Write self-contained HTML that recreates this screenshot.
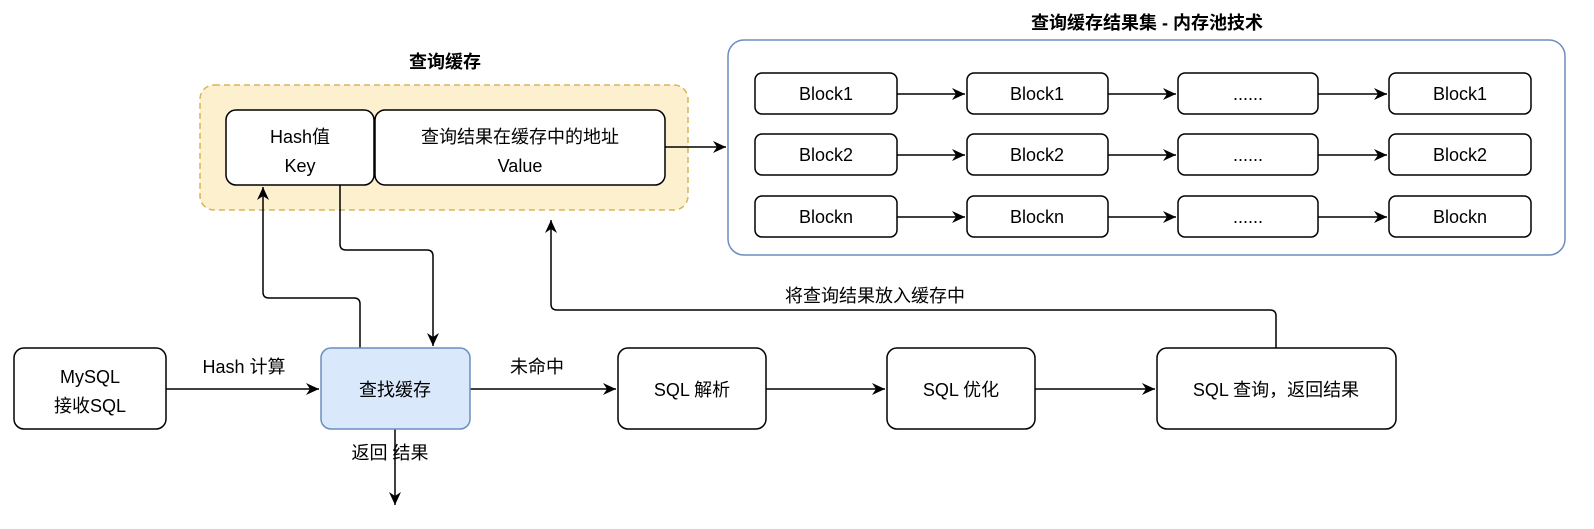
<!DOCTYPE html>
<html><head><meta charset="utf-8"><style>
html,body{margin:0;padding:0;background:#fff;}
svg text{font-family:"Liberation Sans","Noto Sans CJK SC",sans-serif;fill:#000;}
</style></head><body>
<svg width="1594" height="524" viewBox="0 0 1594 524" xmlns="http://www.w3.org/2000/svg">
<defs><marker id="a" markerWidth="14" markerHeight="12" refX="13" refY="6" orient="auto" markerUnits="userSpaceOnUse"><path d="M0,0 L13,6 L0,12 L4,6 Z" fill="#000"/></marker></defs>
<g stroke-width="1.5">
<text x="445" y="68" font-size="18" font-weight="bold" text-anchor="middle">查询缓存</text>
<rect x="200" y="85" width="488" height="125" rx="14" fill="#fdf0cf" stroke="#d6b656" stroke-dasharray="6,4"/>
<rect x="226" y="110" width="148" height="75" rx="10" fill="#fff" stroke="#000"/>
<rect x="375" y="110" width="290" height="75" rx="10" fill="#fff" stroke="#000"/>
<text x="300" y="143" font-size="18" text-anchor="middle">Hash值</text>
<text x="300" y="172" font-size="18" text-anchor="middle">Key</text>
<text x="520" y="143" font-size="18" text-anchor="middle">查询结果在缓存中的地址</text>
<text x="520" y="172" font-size="18" text-anchor="middle">Value</text>
<text x="1147" y="29" font-size="18" font-weight="bold" text-anchor="middle">查询缓存结果集 - 内存池技术</text>
<rect x="728" y="40" width="837" height="215" rx="16" fill="#fff" stroke="#6c8ebf"/>
<g fill="#fff" stroke="#000">
<rect x="755" y="73" width="142" height="41" rx="7"/><rect x="967" y="73" width="141" height="41" rx="7"/><rect x="1178" y="73" width="140" height="41" rx="7"/><rect x="1389" y="73" width="142" height="41" rx="7"/>
<rect x="755" y="134" width="142" height="41" rx="7"/><rect x="967" y="134" width="141" height="41" rx="7"/><rect x="1178" y="134" width="140" height="41" rx="7"/><rect x="1389" y="134" width="142" height="41" rx="7"/>
<rect x="755" y="196" width="142" height="41" rx="7"/><rect x="967" y="196" width="141" height="41" rx="7"/><rect x="1178" y="196" width="140" height="41" rx="7"/><rect x="1389" y="196" width="142" height="41" rx="7"/>
</g>
<g font-size="18" text-anchor="middle">
<text x="826" y="100">Block1</text><text x="1037" y="100">Block1</text><text x="1248" y="100">......</text><text x="1460" y="100">Block1</text>
<text x="826" y="161">Block2</text><text x="1037" y="161">Block2</text><text x="1248" y="161">......</text><text x="1460" y="161">Block2</text>
<text x="826" y="223">Blockn</text><text x="1037" y="223">Blockn</text><text x="1248" y="223">......</text><text x="1460" y="223">Blockn</text>
</g>
<g stroke="#000" fill="none" marker-end="url(#a)">
<path d="M897,94 H965"/><path d="M1108,94 H1176"/><path d="M1318,94 H1387"/>
<path d="M897,155 H965"/><path d="M1108,155 H1176"/><path d="M1318,155 H1387"/>
<path d="M897,217 H965"/><path d="M1108,217 H1176"/><path d="M1318,217 H1387"/>
<path d="M665,147 H726"/>
<path d="M360,348 V304 Q360,298 354,298 H269 Q263,298 263,292 V187"/>
<path d="M340,185 V244 Q340,250 346,250 H427 Q433,250 433,256 V346"/>
<path d="M395,429 V505"/>
<path d="M1276,348 V316 Q1276,310 1270,310 H557 Q551,310 551,304 V220"/>
<path d="M166,389 H319"/><path d="M470,389 H616"/><path d="M766,389 H885"/><path d="M1035,389 H1155"/>
</g>
<rect x="14" y="348" width="152" height="81" rx="10" fill="#fff" stroke="#000"/>
<rect x="321" y="348" width="149" height="81" rx="10" fill="#dae8fc" stroke="#6c8ebf"/>
<rect x="618" y="348" width="148" height="81" rx="10" fill="#fff" stroke="#000"/>
<rect x="887" y="348" width="148" height="81" rx="10" fill="#fff" stroke="#000"/>
<rect x="1157" y="348" width="239" height="81" rx="10" fill="#fff" stroke="#000"/>
<g font-size="18" text-anchor="middle">
<text x="90" y="383">MySQL</text><text x="90" y="412">接收SQL</text>
<text x="395" y="396">查找缓存</text>
<text x="692" y="396">SQL 解析</text>
<text x="961" y="396">SQL 优化</text>
<text x="1276" y="396">SQL 查询，返回结果</text>
<text x="244" y="373">Hash 计算</text>
<text x="537" y="373">未命中</text>
<text x="390" y="459">返回 结果</text>
<text x="875" y="302">将查询结果放入缓存中</text>
</g>
</g>
</svg>
</body></html>
